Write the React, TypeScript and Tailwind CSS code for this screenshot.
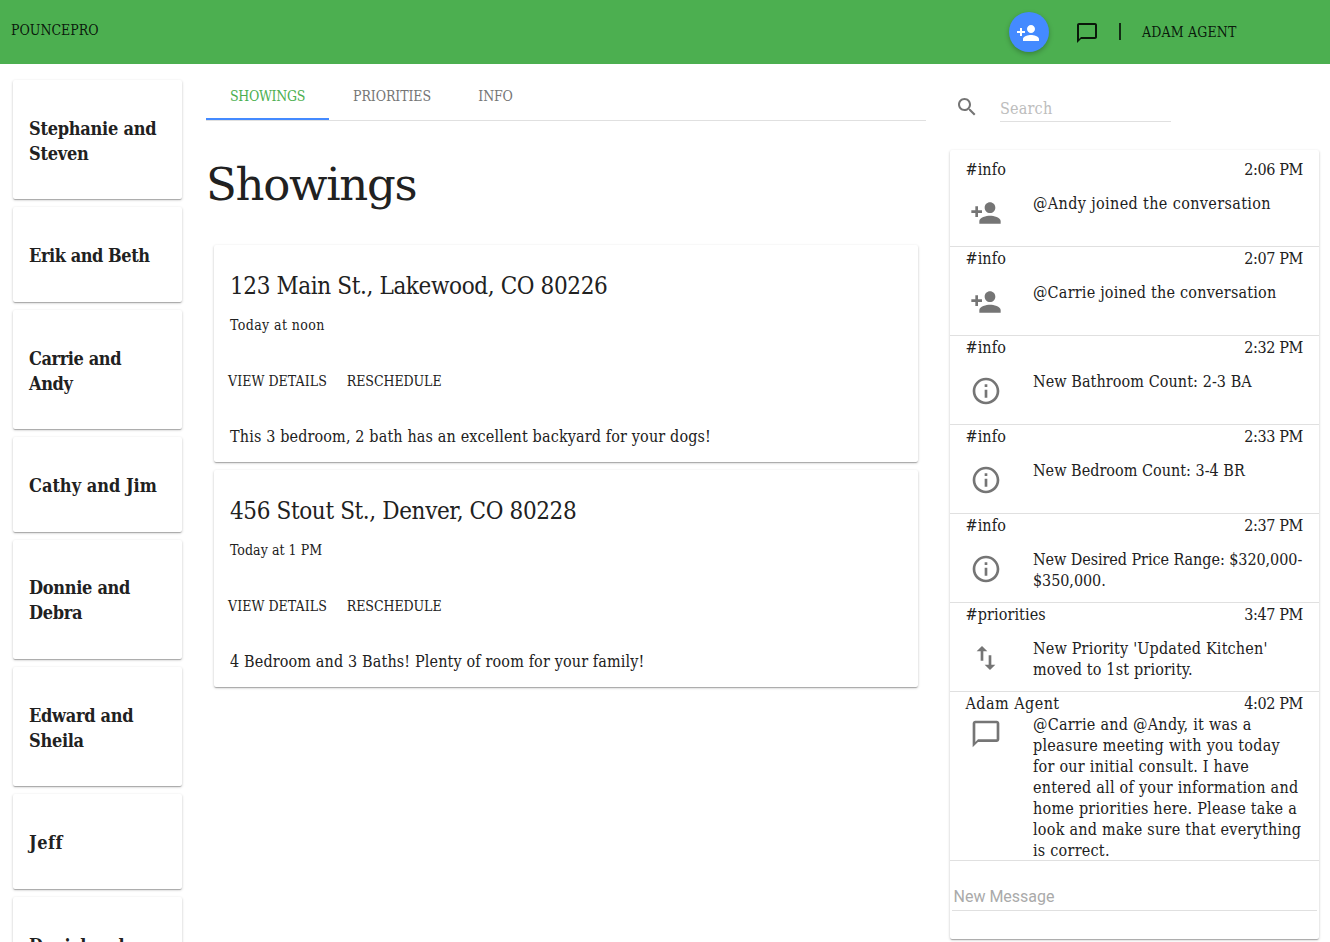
import React from "react";

const icons = {
  personAdd:
    "M15 12c2.21 0 4-1.79 4-4s-1.79-4-4-4-4 1.79-4 4 1.79 4 4 4zm-9-2V7H4v3H1v2h3v3h2v-3h3v-2H6zm9 4c-2.67 0-8 1.34-8 4v2h16v-2c0-2.66-5.33-4-8-4z",
  info: "M11 17h2v-6h-2v6zm1-15C6.48 2 2 6.48 2 12s4.48 10 10 10 10-4.48 10-10S17.52 2 12 2zm0 18c-4.41 0-8-3.59-8-8s3.59-8 8-8 8 3.59 8 8-3.59 8-8 8zM11 9h2V7h-2v2z",
  swap: "M16 17.01V10h-2v7.01h-3L15 21l4-3.99h-3zM9 3L5 6.99h3V14h2V6.99h3L9 3z",
  chat: "M20 2H4c-1.1 0-2 .9-2 2v18l4-4h14c1.1 0 2-.9 2-2V4c0-1.1-.9-2-2-2zm0 14H6l-2 2V4h16v12z",
  search:
    "M15.5 14h-.79l-.28-.27C15.41 12.59 16 11.11 16 9.5 16 5.91 13.09 3 9.5 3S3 5.91 3 9.5 5.91 16 9.5 16c1.61 0 3.09-.59 4.23-1.57l.27.28v.79l5 4.99L20.49 19l-4.99-5zm-6 0C7.01 14 5 11.99 5 9.5S7.01 5 9.5 5 14 7.01 14 9.5 11.99 14 9.5 14z",
};

type IconName = keyof typeof icons;

function Icon({ name, className }: { name: IconName; className: string }) {
  return (
    <svg viewBox="0 0 24 24" fill="currentColor" className={className}>
      <path d={icons[name]} />
    </svg>
  );
}

const clients = [
  { name: "Stephanie and\nSteven", tracking: "tracking-[-0.25px]" },
  { name: "Erik and Beth", tracking: "tracking-[-0.45px]" },
  { name: "Carrie and\nAndy", tracking: "tracking-[-0.4px]" },
  { name: "Cathy and Jim", tracking: "tracking-[0px]" },
  { name: "Donnie and\nDebra", tracking: "tracking-[-0.3px]" },
  { name: "Edward and\nSheila", tracking: "tracking-[-0.3px]" },
  { name: "Jeff", tracking: "tracking-[0.5px]" },
  { name: "Daniel and\nRachel", tracking: "tracking-[-0.3px]" },
];

const showings = [
  {
    address: "123 Main St., Lakewood, CO 80226",
    time: "Today at noon",
    timeTracking: "tracking-[0.4px]",
    note: "This 3 bedroom, 2 bath has an excellent backyard for your dogs!",
  },
  {
    address: "456 Stout St., Denver, CO 80228",
    time: "Today at 1 PM",
    timeTracking: "tracking-[0.05px]",
    note: "4 Bedroom and 3 Baths! Plenty of room for your family!",
  },
];

type Message = {
  from: string;
  time: string;
  icon: IconName;
  tracking: string;
  text: string;
};

const messages: Message[] = [
  { from: "#info", time: "2:06 PM", icon: "personAdd", tracking: "tracking-[0.37px]", text: "@Andy joined the conversation" },
  { from: "#info", time: "2:07 PM", icon: "personAdd", tracking: "tracking-[0.22px]", text: "@Carrie joined the conversation" },
  { from: "#info", time: "2:32 PM", icon: "info", tracking: "tracking-[0.08px]", text: "New Bathroom Count: 2-3 BA" },
  { from: "#info", time: "2:33 PM", icon: "info", tracking: "tracking-[0.02px]", text: "New Bedroom Count: 3-4 BR" },
  { from: "#info", time: "2:37 PM", icon: "info", tracking: "tracking-[-0.06px]", text: "New Desired Price Range: $320,000-\n$350,000." },
  { from: "#priorities", time: "3:47 PM", icon: "swap", tracking: "tracking-[0.18px]", text: "New Priority 'Updated Kitchen'\nmoved to 1st priority." },
  {
    from: "Adam Agent",
    time: "4:02 PM",
    icon: "chat",
    tracking: "tracking-[0.25px]",
    text: "@Carrie and @Andy, it was a\npleasure meeting with you today\nfor our initial consult. I have\nentered all of your information and\nhome priorities here. Please take a\nlook and make sure that everything\nis correct.",
  },
];

const card =
  "rounded-[2px] bg-white shadow-[0_1px_3px_0_rgba(0,0,0,0.2),0_1px_1px_0_rgba(0,0,0,0.14),0_2px_1px_-1px_rgba(0,0,0,0.12)]";

function MessageRow({ message }: { message: Message }) {
  const chat = message.icon === "chat";
  return (
    <div className={`border-b border-[#e0e0e0] px-4 ${chat ? "h-[169px]" : "h-[89px]"}`}>
      <div className="-ml-[0.5px] flex justify-between pt-px">
        <span className={chat ? "tracking-[0.45px]" : "tracking-[0.1px]"}>{message.from}</span>
        <span className="tracking-[-0.35px]">{message.time}</span>
      </div>
      <div className={`flex ${chat ? "" : "pt-[13px]"}`}>
        <Icon
          name={message.icon}
          className={`ml-[4.4px] size-8 shrink-0 text-[#757575] ${chat ? "mt-[3.5px]" : "mt-1"}`}
        />
        <p className={`ml-[30.6px] whitespace-pre ${message.tracking}`}>{message.text}</p>
      </div>
    </div>
  );
}

export default function App() {
  return (
    <div className="flex h-[942px] w-[1330px] flex-col overflow-hidden bg-white font-['Roboto_Slab','DejaVu_Serif_Condensed','DejaVu_Serif',serif] text-[16px] leading-[21px] text-[#212121] [font-stretch:condensed]">
      <header className="flex h-16 shrink-0 items-center bg-[#4caf50] text-[14px] text-black/87">
        <span className="mb-1 ml-[11px]">POUNCEPRO</span>
        <button className="ml-auto flex size-10 items-center justify-center rounded-full bg-[#448aff] text-white shadow-[0_2px_5px_0_rgba(0,0,0,0.26)]">
          <Icon name="personAdd" className="mt-0.5 mr-0.5 size-6" />
        </button>
        <Icon name="chat" className="mt-0.5 ml-[26px] size-6" />
        <span className="mb-0.5 ml-5 h-[17px] w-0.5 bg-black/75" />
        <span className="mr-[93px] ml-[21px] w-[95px] whitespace-nowrap tracking-[0.15px]">ADAM AGENT</span>
      </header>

      <div className="flex min-h-0 flex-1">
        <aside className="ml-[13px] flex w-[169px] shrink-0 flex-col gap-2 pt-4">
          {clients.map((client) => (
            <div key={client.name} className={`${card} shrink-0 px-4 pt-[35.8px] pb-[33.6px]`}>
              <h3 className={`text-[18px] leading-[25px] font-bold whitespace-pre ${client.tracking}`}>{client.name}</h3>
            </div>
          ))}
        </aside>

        <main className="ml-6 w-[720px] shrink-0 pt-2">
          <nav className="flex h-[49px] border-b border-[#e0e0e0] text-[14px] text-[#757575]">
            <span className="h-12 w-[123px] border-b-2 border-[#448aff] pt-3.5 text-center tracking-[-0.3px] text-[#4caf50]">
              SHOWINGS
            </span>
            <span className="w-[126px] pt-3.5 text-center tracking-[-0.1px]">PRIORITIES</span>
            <span className="w-[81px] pt-3.5 text-center tracking-[-0.2px]">INFO</span>
          </nav>
          <h1 className="mt-[34px] font-['Roboto_Slab','DejaVu_Serif',serif] text-[45px] leading-[60px] tracking-[-1.3px] [font-stretch:normal]">
            Showings
          </h1>
          <div className="mx-2 mt-[30px] flex flex-col gap-2">
            {showings.map((s) => (
              <section key={s.address} className={`${card} h-[217px] px-4 pt-[25px]`}>
                <h2 className="text-[24px] leading-8 tracking-[-0.38px]">{s.address}</h2>
                <p className={`mt-[13px] text-[14px] leading-5 ${s.timeTracking}`}>{s.time}</p>
                <div className="mt-9 -ml-0.5 flex gap-5 text-[14px] leading-5">
                  <span className="tracking-[0.05px]">VIEW DETAILS</span>
                  <span className="tracking-[-0.07px]">RESCHEDULE</span>
                </div>
                <p className="mt-[35px] tracking-[0.14px]">{s.note}</p>
              </section>
            ))}
          </div>
        </main>

        <aside className="ml-6 w-[369px] shrink-0 pt-[31px]">
          <div className="flex h-[55px]">
            <Icon name="search" className="ml-[5.4px] size-6 text-[#757575]" />
            <div className="ml-[20.6px] h-[27px] w-[171px] border-b border-[#e0e0e0] pt-[3px] tracking-[0.2px] text-[#bdbdbd]">
              Search
            </div>
          </div>
          <div className={`${card} h-[789px] pt-2`}>
            {messages.map((m) => (
              <MessageRow key={m.time} message={m} />
            ))}
            <div className="mx-0.5 mt-[25px] h-[25px] border-b border-[#e0e0e0] pl-[1.5px] font-[Roboto,sans-serif] text-[#aaa] [font-stretch:normal]">
              New Message
            </div>
          </div>
        </aside>
      </div>
    </div>
  );
}
